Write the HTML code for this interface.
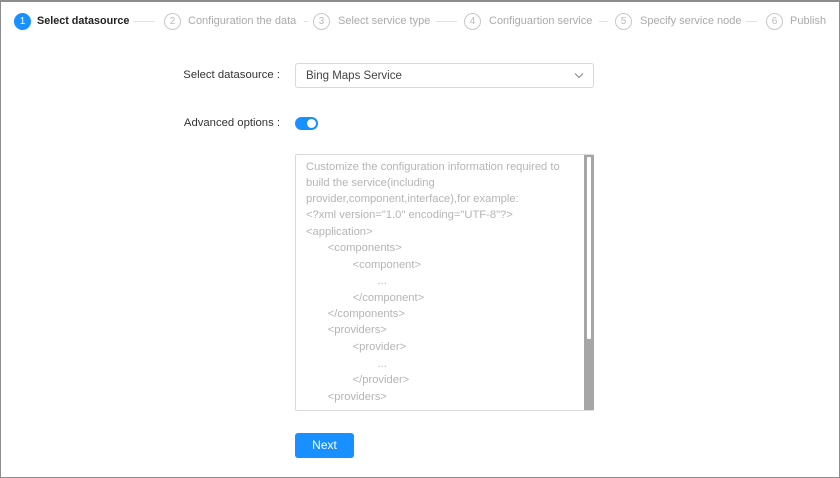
<!DOCTYPE html><html><head><style>
*{margin:0;padding:0;box-sizing:border-box}
body{width:840px;height:478px;background:#fff;font-family:"Liberation Sans",sans-serif;position:relative;overflow:hidden}
.frame{position:absolute;left:0;top:0;width:840px;height:478px;border:1px solid #8c8c8c;border-top:2px solid #8c8c8c}
.a{position:absolute;white-space:nowrap}
.c{position:absolute;top:13px;width:17px;height:17px;border-radius:50%;border:1px solid #c8c8c8;color:#bbb;font-size:10px;text-align:center;line-height:15px}
.t{position:absolute;top:15px;font-size:11px;color:#aaa;white-space:nowrap}
.l{position:absolute;top:21px;height:1px;background:#e3e3e3}
.lab{position:absolute;right:560px;font-size:11.3px;color:#333;white-space:nowrap}
.ta{position:absolute;left:295px;top:154px;width:299px;height:257px;border:1px solid #d9d9d9;border-radius:2px}
.ta div{position:absolute;left:10px;font-size:11.2px;color:#b5b5b5;white-space:pre}
</style></head><body>
<div class="frame"></div>
<div class="c" style="left:14px;background:#1890ff;border-color:#1890ff;color:#fff">1</div>
<div class="t" style="left:37px;color:#222;font-weight:bold;font-size:10.8px">Select datasource</div>
<div class="l" style="left:133px;width:22px"></div>
<div class="c" style="left:164px">2</div><div class="t" style="left:188px">Configuration the data</div>
<div class="l" style="left:304px;width:4px"></div>
<div class="c" style="left:313px">3</div><div class="t" style="left:338px">Select service type</div>
<div class="l" style="left:436px;width:21px"></div>
<div class="c" style="left:464px">4</div><div class="t" style="left:489px">Configuartion service</div>
<div class="l" style="left:599px;width:9px"></div>
<div class="c" style="left:615px">5</div><div class="t" style="left:640px">Specify service node</div>
<div class="l" style="left:746px;width:11px"></div>
<div class="c" style="left:766px">6</div><div class="t" style="left:790px">Publish</div>

<div class="lab" style="top:69px">Select datasource :</div>
<div class="a" style="left:295px;top:63px;width:299px;height:25px;border:1px solid #d9d9d9;border-radius:3px;font-size:11.5px;color:#444;padding:6px 10px">Bing Maps Service
<svg style="position:absolute;right:9px;top:8px" width="10" height="7" viewBox="0 0 10 7"><path d="M1 1.5L5 5.5L9 1.5" fill="none" stroke="#888" stroke-width="1.1"/></svg></div>
<div class="lab" style="top:117px">Advanced options :</div>
<div class="a" style="left:295px;top:117px;width:23px;height:13px;border-radius:7px;background:#1890ff"><div style="position:absolute;right:2px;top:2px;width:9px;height:9px;border-radius:50%;background:#fff"></div></div>

<div class="ta">
<div style="top:6px">Customize the configuration information required to</div>
<div style="top:22px">build the service(including</div>
<div style="top:38px">provider,component,interface),for example:</div>
<div style="top:54px">&lt;?xml version="1.0" encoding="UTF-8"?&gt;</div>
<div style="top:71px">&lt;application&gt;</div>
<div style="top:87px">       &lt;components&gt;</div>
<div style="top:104px">               &lt;component&gt;</div>
<div style="top:120px">                       ...</div>
<div style="top:137px">               &lt;/component&gt;</div>
<div style="top:153px">       &lt;/components&gt;</div>
<div style="top:169px">       &lt;providers&gt;</div>
<div style="top:186px">               &lt;provider&gt;</div>
<div style="top:203px">                       ...</div>
<div style="top:219px">               &lt;/provider&gt;</div>
<div style="top:236px">       &lt;providers&gt;</div>
<span style="position:absolute;left:288px;top:0;width:10px;height:255px;background:#a6a6a6"></span>
<span style="position:absolute;left:291px;top:2px;width:4px;height:182px;background:#fff;border-radius:1px"></span>
</div>
<div class="a" style="left:295px;top:433px;width:59px;height:25px;background:#1890ff;border-radius:3px;color:#fff;font-size:12px;text-align:center;line-height:25px">Next</div>
</body></html>
